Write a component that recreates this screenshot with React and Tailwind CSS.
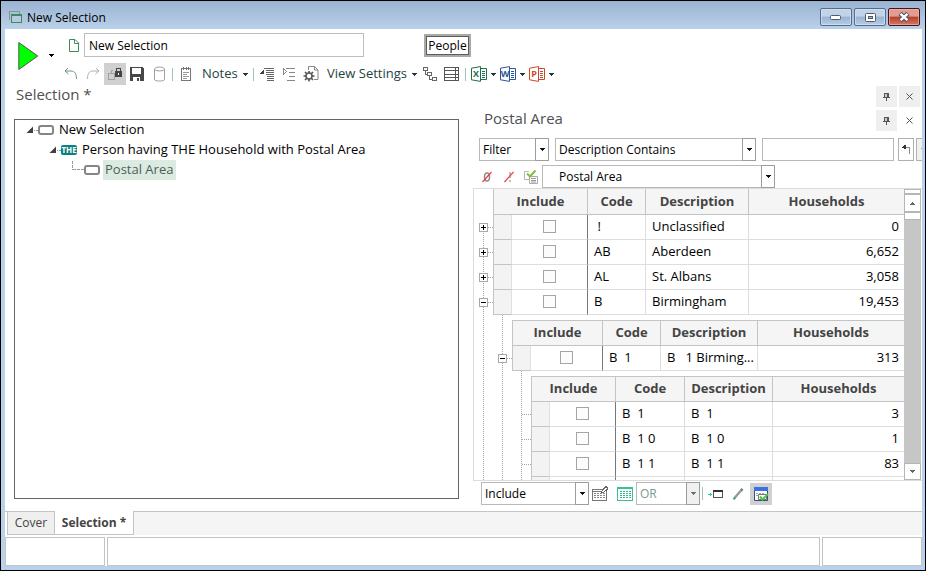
import clsx from "clsx";

const Caret = ({ className = "fill-[#1d3b33]" }) => (
  <svg width="5" height="3" viewBox="0 0 5 3" className={className} shapeRendering="crispEdges">
    <path d="M0 0h5v1H4v1H3v1H2V2H1V1H0z" />
  </svg>
);

const Separator = () => <span className="mx-0.5 h-[13px] w-px shrink-0 bg-[#9fc4b0]" />;

const IconButton = ({ label, active, children }) => (
  <button
    type="button"
    aria-label={label}
    className={clsx(
      "flex h-[22px] w-[22px] shrink-0 items-center justify-center",
      active && "bg-[#d0d0d0]"
    )}
  >
    {children}
  </button>
);

const Svg = ({ children, crisp = false }) => (
  <svg
    width="16"
    height="16"
    viewBox="0 0 16 16"
    fill="none"
    shapeRendering={crisp ? "crispEdges" : "auto"}
  >
    {children}
  </svg>
);

const Combo = ({
  label,
  value,
  className,
  selectClassName = "pl-[3px] text-black",
  disabled,
}) => (
  <div className={clsx("relative h-[23px] shrink-0", className)}>
    <select
      aria-label={label}
      disabled={disabled}
      className={clsx(
        "block h-full w-full appearance-none border border-[#b9b9b9] bg-white pr-4 text-[12px] leading-5",
        selectClassName
      )}
    >
      <option>{value}</option>
    </select>
    <span
      className={clsx(
        "pointer-events-none absolute inset-y-0 right-0 flex w-[14px] items-center justify-center border border-[#9d9d9d]",
        disabled ? "bg-[#f0f0f0]" : "bg-white"
      )}
    >
      <Caret className={disabled ? "fill-[#6f6f6f]" : "fill-[#111111]"} />
    </span>
  </div>
);

const OfficeIcon = ({ letter, color }) => (
  <svg width="16" height="16" viewBox="0 0 16 16" fill="none">
    <path d="M9 2.5h6.5v11H9" fill="#fff" stroke={color} />
    <path d="M11 5.5h3M11 7.5h3M11 9.5h3M11 11.5h3" stroke={color} />
    <path d="M.5 2.2 9.5.6v14.8L.5 13.8z" fill="#fff" stroke={color} />
    <text x="5" y="11" fontSize="9" fontWeight="700" textAnchor="middle" fill={color}>
      {letter}
    </text>
  </svg>
);

const PanelButtons = ({ lightClose }) => (
  <div className="flex gap-0.5 pr-0.5">
    <button
      type="button"
      aria-label="Pin"
      className="flex h-[21px] w-[21px] items-center justify-center bg-[#efefef]"
    >
      <svg width="7" height="8" viewBox="0 0 7 8" shapeRendering="crispEdges">
        <path d="M1 0h5v4h1v1H4v3H3V5H0V4h1z" fill="#555" />
        <path d="M2 1h2v3H2z" fill="#ccc" />
      </svg>
    </button>
    <button
      type="button"
      aria-label="Close"
      className={clsx(
        "flex h-[21px] w-[21px] items-center justify-center",
        !lightClose && "bg-[#efefef]"
      )}
    >
      <svg width="7" height="7" viewBox="0 0 7 7">
        <path d="M.5.5l6 6M6.5.5l-6 6" stroke="#555" />
      </svg>
    </button>
  </div>
);

const TitleBar = () => (
  <header className="flex h-7 shrink-0 items-center bg-linear-to-b from-[#9ab3d1] to-[#b9d1ea] pt-1 pr-[5px] pl-2">
    <svg width="13" height="12" viewBox="0 0 13 12" fill="none" shapeRendering="crispEdges">
      <path d="M.5 8.5v-8h10v2" stroke="#8b9296" />
      <path d="M2.5 3.5h10v8h-10z" fill="#b4cbe0" stroke="#3e8a5c" />
      <path d="M2 4.500h11" stroke="#3e8a5c" />
    </svg>
    <h1 className="ml-[5px] flex-1 pt-0.5 text-[12px] leading-5 text-black">New Selection</h1>
    <div className="flex gap-0.5">
      <button
        type="button"
        aria-label="Minimize"
        className="flex h-[18px] w-8 items-center justify-center rounded-[2px] border border-[#586c88] bg-linear-to-b from-[#c0d3e8] from-45% via-[#98b3d2] via-50% to-[#b5cde8] inset-ring inset-ring-[#d6e4f2]/70"
      >
        <svg width="12" height="5" viewBox="0 0 12 5">
          <rect x=".5" y=".5" width="10" height="4" rx="1" fill="#fff" stroke="#535b69" />
        </svg>
      </button>
      <button
        type="button"
        aria-label="Maximize"
        className="flex h-[18px] w-8 items-center justify-center rounded-[2px] border border-[#586c88] bg-linear-to-b from-[#c0d3e8] from-45% via-[#98b3d2] via-50% to-[#b5cde8] inset-ring inset-ring-[#d6e4f2]/70"
      >
        <svg width="11" height="9" viewBox="0 0 11 9">
          <rect x=".5" y=".5" width="10" height="8" rx="1" fill="#fff" stroke="#535b69" />
          <rect x="3.500" y="3.500" width="4" height="2" fill="#9db5d2" stroke="#535b69" />
        </svg>
      </button>
      <button
        type="button"
        aria-label="Close window"
        className="flex h-[18px] w-8 items-center justify-center rounded-[2px] border border-[#431422] bg-linear-to-b from-[#e39c90] from-45% via-[#b93c28] via-50% to-[#d27a66] inset-ring inset-ring-[#f0bdb2]/60"
      >
        <svg width="12" height="10" viewBox="0 0 12 10">
          <path d="M2 1.500l8 7M10 1.500l-8 7" stroke="#535666" strokeWidth="4.500" />
          <path d="M2.500 1.800l7 6.400M9.500 1.800l-7 6.400" stroke="#fff" strokeWidth="2.400" />
        </svg>
      </button>
    </div>
  </header>
);

const Toolbar = () => (
  <div className="flex h-[57px] shrink-0">
    <div className="flex w-[55px] shrink-0 items-center gap-2.5 pb-1 pl-[13px]">
      <button type="button" aria-label="Run">
        <svg width="21" height="30" viewBox="0 0 21 30">
          <path d="M.8 1.500v27L19.800 15z" fill="#00ff00" stroke="#4d5b4d" />
        </svg>
      </button>
      <button type="button" aria-label="Run options">
        <Caret className="fill-black" />
      </button>
    </div>
    <div className="flex flex-col gap-1.5 pt-1">
      <div className="flex h-6 items-center">
        <svg width="10" height="13" viewBox="0 0 10 13" fill="none" className="ml-[9px]">
          <path d="M.5.5h5.500l3.500 3.500v8.500h-9z" stroke="#3e8a5c" />
          <path d="M5.500.5v4h4" stroke="#3e8a5c" />
        </svg>
        <input
          type="text"
          aria-label="Selection name"
          defaultValue="New Selection"
          className="ml-[5px] h-6 w-[280px] border border-[#bdbdbd] px-1 text-[12px] text-black"
        />
        <button
          type="button"
          className="ml-[60px] h-[23px] w-[47px] border-2 border-[#a9a9a9] bg-white text-[12px] leading-[17px] text-black inset-ring inset-ring-[#5c5c5c]"
        >
          People
        </button>
      </div>
      <div className="flex h-[22px] items-center text-[13px] text-[#24443f]">
        <IconButton label="Undo">
          <Svg>
            <path d="M5 2 2 5l3.500 3M2.500 5H8c4 0 5.500 3 5.500 8" stroke="#6f9480" />
          </Svg>
        </IconButton>
        <IconButton label="Redo">
          <Svg>
            <path d="M11 2l3 3-3.500 3M13.500 5H8C4 5 2.500 8 2.500 13" stroke="#a9b2ae" />
          </Svg>
        </IconButton>
        <IconButton label="Lock" active>
          <Svg crisp>
            <path d="M1.500 7.500h6v6h-6zM5.500 4.500h-1v3M7.500 10.500h3v-2" stroke="#a2a2a2" />
            <path d="M8 5h7v6H8z" fill="#444" />
            <path d="M9.500 5V2.500h4V5" stroke="#444" />
            <path d="M11 7h1v2h-1z" fill="#fff" />
          </Svg>
        </IconButton>
        <IconButton label="Save">
          <Svg crisp>
            <path d="M1 1h12l2 2v12H1z" fill="#484848" />
            <path d="M3 2h9v6H3zM4 11h7v4H4z" fill="#fff" />
            <path d="M8 12h2v3H8z" fill="#484848" />
          </Svg>
        </IconButton>
        <IconButton label="Database">
          <Svg>
            <ellipse cx="8.500" cy="3" rx="5" ry="2" stroke="#a0a0a0" />
            <path d="M3.500 3v10.500c0 2 10 2 10 0V3" stroke="#a0a0a0" />
          </Svg>
        </IconButton>
        <Separator />
        <IconButton label="Note pad">
          <Svg crisp>
            <path d="M3.500 2.500h9v12h-9z" stroke="#777" />
            <path d="M5.500 1v3M8.500 1v3M10.500 1v3" stroke="#777" />
            <path d="M5 6.500h6M5 8.500h4M5 10.500h6M5 12.500h4" stroke="#999" />
          </Svg>
        </IconButton>
        <button type="button" className="flex w-[54px] items-center justify-between pr-[3px] pl-[5px]">
          Notes <Caret />
        </button>
        <Separator />
        <IconButton label="Outdent">
          <Svg crisp>
            <path d="M5 3v5H0z" fill="#444" />
            <path d="M5 2.500h10M7 4.500h8M7 6.500h8M7 8.500h8M8 10.500h7M8 12.500h7M8 14.500h7" stroke="#666" />
          </Svg>
        </IconButton>
        <IconButton label="Indent">
          <Svg crisp>
            <path d="M2.500 2.500l3 3-3 3z" stroke="#888" />
            <path d="M5 2.500h9M8 6.500h6M8 10.500h6M6 14.500h8" stroke="#888" />
          </Svg>
        </IconButton>
        <IconButton label="Document settings">
          <Svg>
            <path d="M5.500 4V.5h6l3.500 3.500v9.500h-4M11.500.5V4H15" stroke="#888" />
            <circle cx="6" cy="10" r="3" stroke="#555" strokeWidth="1.500" />
            <path
              d="M6 5v2M6 13v2.500M.5 10H3M9 10h2.500M2 6l1.500 1.500M8.500 12.500 10 14M10 6 8.500 7.500M3.500 12.500 2 14"
              stroke="#555"
              strokeWidth="1.600"
            />
          </Svg>
        </IconButton>
        <button type="button" className="flex w-[97px] items-center justify-between pr-0.5 pl-[5px]">
          View Settings <Caret />
        </button>
        <IconButton label="Tree view">
          <Svg crisp>
            <path
              d="M1.500 1.500h4v3h-4zM5.500 6.500h4v3h-4zM10.500 11.500h4v3h-4zM3.500 4v4h2M7.500 9v4h3"
              stroke="#666"
            />
          </Svg>
        </IconButton>
        <IconButton label="Table view">
          <Svg crisp>
            <path d="M.5 1.500h14v13H.5zM0 4.500h15M0 8.500h15M0 11.500h15M11.500 1v14" stroke="#555" />
          </Svg>
        </IconButton>
        <Separator />
        {[
          { letter: "X", color: "#1e7145", label: "Excel" },
          { letter: "W", color: "#2b579a", label: "Word" },
          { letter: "P", color: "#d04727", label: "PowerPoint" },
        ].map((app) => (
          <button
            key={app.letter}
            type="button"
            aria-label={`Export to ${app.label}`}
            className="flex w-[29px] items-center gap-1 pl-[3px]"
          >
            <OfficeIcon letter={app.letter} color={app.color} />
            <Caret />
          </button>
        ))}
      </div>
    </div>
  </div>
);

const TreeArrow = () => (
  <svg width="12" height="8" viewBox="0 0 12 8">
    <path d="M7 .5v6.500H.5z" fill="#404040" />
    <path d="M8 4.500h1M10 4.500h2" stroke="#999" />
  </svg>
);

const TreeShape = () => (
  <svg width="16" height="10" viewBox="0 0 16 10" fill="none">
    <rect x="1" y="1" width="14" height="8" rx="2" stroke="#858585" strokeWidth="2" />
  </svg>
);

const SelectionTree = () => (
  <ul className="flex-1 border border-[#646464] text-[13px] text-black">
    <li className="flex h-5 items-center pl-[11px]">
      <TreeArrow />
      <TreeShape />
      <span className="ml-[5px] pb-0.5 leading-[18px]">New Selection</span>
    </li>
    <li className="flex h-5 items-center pl-[34px]">
      <TreeArrow />
      <span className="flex h-[10px] w-4 items-center justify-center rounded-[2px] bg-[#0d8080] text-[8px] leading-none font-bold text-white">
        THE
      </span>
      <span className="ml-[5px] pb-0.5 leading-[18px]">
        Person having THE Household with Postal Area
      </span>
    </li>
    <li className="flex h-5 items-center pl-[57px]">
      <svg width="12" height="20" viewBox="0 0 12 20" fill="none" shapeRendering="crispEdges">
        <path d="M.5 1v9M1 9.500h11" stroke="#999" strokeDasharray="3 1" />
      </svg>
      <TreeShape />
      <span className="ml-[3px] bg-[#dcebe2] pr-[3px] pb-0.5 pl-0.5 leading-[18px] text-[#4c5f55]">
        Postal Area
      </span>
    </li>
  </ul>
);

const areas = [
  { code: " !", description: "Unclassified", households: "0", state: "closed" },
  { code: "AB", description: "Aberdeen", households: "6,652", state: "closed" },
  { code: "AL", description: "St. Albans", households: "3,058", state: "closed" },
  { code: "B", description: "Birmingham", households: "19,453", state: "open" },
];

const districts = [
  { code: "B  1", description: "B   1 Birming...", households: "313", state: "open" },
];

const sectors = [
  { code: "B  1", description: "B  1", households: "3" },
  { code: "B  1 0", description: "B  1 0", households: "1" },
  { code: "B  1 1", description: "B  1 1", households: "83" },
  { code: "", description: "", households: "" },
];

const Expander = ({ state, code }) => (
  <div className="relative flex h-[25px] items-center justify-center">
    <span className="absolute top-3 right-0 left-[10px] border-t border-dotted border-[#a5a5a5]" />
    {state && (
      <button
        type="button"
        aria-label={`${state === "open" ? "Collapse" : "Expand"} ${code}`}
        className="relative bg-white"
      >
        <svg width="9" height="9" viewBox="0 0 9 9" fill="none" shapeRendering="crispEdges">
          <path d="M.5.5h8v8h-8z" stroke="#a8a8a8" />
          <path d={state === "open" ? "M2 4.500h5" : "M2 4.500h5M4.500 2v5"} stroke="#000" />
        </svg>
      </button>
    )}
  </div>
);

// One level of the grid: expander gutter, the table itself and any nested level
const Band = ({ rows, columns, nested, children }) => (
  <div className={clsx("flex", nested && "flex-1")}>
    <div className={clsx("relative w-[19px] shrink-0", nested ? "pt-[31px]" : "pt-[26px]")}>
      <span
        className={clsx(
          "absolute bottom-0 left-[9px] border-l border-dotted border-[#a5a5a5]",
          nested ? "top-0" : "top-[38px]"
        )}
      />
      {rows.map((row) => (
        <Expander key={row.code} state={row.state} code={row.code} />
      ))}
    </div>
    <div className={clsx("flex min-w-0 flex-1 flex-col", nested && "pt-[5px]")}>
      <table className="w-full table-fixed border-separate border-spacing-0 border-l border-[#c4c4c4] text-[13px] leading-5">
        <colgroup>
          <col className="w-[18px]" />
          {columns.map((width) => (
            <col key={width} className={width} />
          ))}
          <col />
        </colgroup>
        <thead>
          <tr className="h-[26px] bg-[#f5f5f5] text-[#444444]">
            <th
              colSpan={2}
              className={clsx(
                "border-r border-b border-[#c4c4c4] px-0 pt-0 pb-0.5",
                nested && "border-t"
              )}
            >
              Include
            </th>
            {["Code", "Description", "Households"].map((title) => (
              <th
                key={title}
                className={clsx(
                  "border-b border-[#c4c4c4] px-0 pt-0 pb-0.5",
                  title !== "Households" && "border-r",
                  nested && "border-t"
                )}
              >
                {title}
              </th>
            ))}
          </tr>
        </thead>
        <tbody>
          {rows.map((row) => (
            <tr key={row.code} className="h-[25px] text-black">
              <td className="border-r border-b border-r-[#e0e0e0] border-b-[#c4c4c4] bg-[#f3f3f3] p-0" />
              <td className="border-r border-b border-r-[#777777] border-b-[#dedede] px-0 pt-0 pb-0.5">
                <input
                  type="checkbox"
                  aria-label={`Include ${row.code}`}
                  className="mx-auto block h-[13px] w-[13px] appearance-none border border-[#a5a5a5] bg-[#fcfcfc]"
                />
              </td>
              <td className="border-r border-b border-[#dedede] pt-0 pr-0 pb-0.5 pl-[6px] whitespace-pre">
                {row.code}
              </td>
              <td className="border-r border-b border-[#dedede] pt-0 pr-0 pb-0.5 pl-[6px] whitespace-pre">
                {row.description}
              </td>
              <td className="border-b border-[#dedede] pt-0 pr-[5px] pb-0.5 text-right">
                {row.households}
              </td>
            </tr>
          ))}
        </tbody>
      </table>
      {children}
    </div>
  </div>
);

const ScrollBar = () => (
  <div className="flex w-[17px] shrink-0 flex-col bg-[#c6c6c6]">
    <span className="h-[5px] border border-[#b5b5b5] bg-white" />
    <button
      type="button"
      aria-label="Scroll up"
      className="flex h-[18px] items-center justify-center border border-[#b5b5b5] bg-white"
    >
      <svg width="5" height="3" viewBox="0 0 5 3" shapeRendering="crispEdges">
        <path d="M2 0h1v1h1v1h1v1H0V2h1V1h1z" fill="#666" />
      </svg>
    </button>
    <span className="h-2 border border-[#b5b5b5] bg-white" />
    <span className="flex-1" />
    <button
      type="button"
      aria-label="Scroll down"
      className="flex h-[17px] items-center justify-center border border-[#b5b5b5] bg-white"
    >
      <Caret className="fill-[#666666]" />
    </button>
  </div>
);

const PostalGrid = () => (
  <div className="flex min-h-0 flex-1 border border-r-0 border-[#dcdcdc]">
    <div className="flex min-w-0 flex-1 flex-col overflow-hidden">
      <Band rows={areas} columns={["w-[76px]", "w-[58px]", "w-[103px]"]}>
        <Band rows={districts} columns={["w-[72px]", "w-[58px]", "w-[97px]"]} nested>
          <Band rows={sectors} columns={["w-[66px]", "w-[69px]", "w-[88px]"]} nested />
        </Band>
      </Band>
    </div>
    <ScrollBar />
    <span className="w-px" />
  </div>
);

const PostalPanel = () => (
  <section className="flex w-[449px] shrink-0 flex-col pt-[3px]">
    <div className="flex h-[21px] items-center justify-between pl-[11px]">
      <h2 className="pb-1 text-[15px] leading-[17px] text-[#505050]">Postal Area</h2>
      <PanelButtons lightClose />
    </div>
    <div className="mt-[7px] flex overflow-hidden pl-1.5">
      <Combo label="Mode" value="Filter" className="w-[70px]" />
      <Combo label="Filter type" value="Description Contains" className="ml-1.5 w-[201px]" />
      <input
        type="text"
        aria-label="Filter text"
        className="ml-1.5 h-[23px] w-[132px] shrink-0 border border-[#b9b9b9] px-1 text-[12px]"
      />
      <button
        type="button"
        aria-label="Apply filter"
        className="ml-1 flex h-[23px] w-4 shrink-0 items-center justify-center border border-[#b0b0b0] bg-white"
      >
        <svg width="9" height="9" viewBox="0 0 9 9" fill="none" shapeRendering="crispEdges">
          <path d="M0 2h1V1h1V0h2v4H2V3H1V3H0z" fill="#333" />
          <path d="M4 2.500h3.500V9" stroke="#888" />
        </svg>
      </button>
      <button
        type="button"
        aria-label="Next filter"
        className="ml-0.5 flex h-[23px] w-4 shrink-0 items-center border border-[#b0b0b0] bg-[#f0f0f0] pl-1"
      >
        <Caret className="fill-[#999999]" />
      </button>
    </div>
    <div className="mt-1 flex items-center pl-[3px]">
      <IconButton label="Exclude zero counts">
        <Svg>
          <ellipse cx="8" cy="8" rx="2.500" ry="4" stroke="#8c8c8c" strokeWidth="1.500" />
          <path d="M3.500 13 12.500 3" stroke="#ee3d44" strokeWidth="1.200" />
        </Svg>
      </IconButton>
      <IconButton label="Exclude unclassified">
        <Svg>
          <path d="M9 3v6M9 11v2" stroke="#c0c0c0" strokeWidth="2" />
          <path d="M3.500 13 12.500 3" stroke="#ee3d44" strokeWidth="1.200" />
        </Svg>
      </IconButton>
      <IconButton label="Show selected">
        <Svg>
          <path d="M6 2.500H1.500v8H6" stroke="#b5b5b5" />
          <path d="M6.500 7.500h8v7h-8z" fill="#fff" stroke="#aaa" />
          <path d="M8 9.500h5M8 11.500h5M8 13h5" stroke="#999" />
          <path d="M4 4.500 7 7.500l5.500-6" stroke="#83bf3f" strokeWidth="2" />
        </Svg>
      </IconButton>
      <Combo
        label="Variable"
        value="Postal Area"
        className="w-[233px]"
        selectClassName="pl-4 text-black"
      />
    </div>
    <PostalGrid />
    <div className="mt-px mb-1.5 flex h-[23px] items-center pl-2">
      <Combo label="Include mode" value="Include" className="w-[108px]" />
      <IconButton label="Edit table">
        <Svg crisp>
          <path d="M.5 3.500h14v11H.5zM0 5.500h9" stroke="#777" />
          <path d="M2 7.500h11M2 9.500h11M2 11.500h11" stroke="#888" strokeDasharray="2 1" />
          <path d="M9 6 14 .5l2 2L11 7z" fill="#fff" stroke="#666" />
        </Svg>
      </IconButton>
      <span className="w-[3px]" />
      <IconButton label="Table">
        <Svg crisp>
          <path d="M.5 1.500h15v13H.5zM0 2.500h16" stroke="#35c295" />
          <path d="M3 5.500h11M3 7.500h11M3 9.500h11M3 11.500h11" stroke="#35b58c" strokeDasharray="2 1" />
        </Svg>
      </IconButton>
      <Combo
        label="Operator"
        value="OR"
        className="w-16"
        selectClassName="pl-[3px] text-[#7d9a8c]"
        disabled
      />
      <Separator />
      <IconButton label="Send to window">
        <Svg crisp>
          <path d="M0 8.500h4M2.500 7v3" stroke="#35c295" />
          <path d="M5.500 4.500h9v7h-9z" fill="#fff" stroke="#555" />
          <path d="M5 4h10v2H5z" fill="#333" />
        </Svg>
      </IconButton>
      <IconButton label="Edit">
        <Svg>
          <path d="M4.500 12 11 4.500" stroke="#999" strokeWidth="2.500" />
          <path d="M11 4.500 12.500 3" stroke="#4c8a68" strokeWidth="2.500" />
          <path d="M3.500 13.300 5 11.500" stroke="#35a580" strokeWidth="2" />
        </Svg>
      </IconButton>
      <span className="w-px" />
      <IconButton label="Auto apply" active>
        <Svg>
          <path d="M1 1h14v13H1z" fill="#fdfdfd" />
          <path d="M1 1h14v4H1z" fill="#3c6fe0" />
          <path d="M1.500 5v9.500h13V5" stroke="#33517f" />
          <path d="M3 7.500h9M3 9.500h2" stroke="#9aa7bb" strokeDasharray="2 1" />
          <path d="M5.500 8.500h8v5h-8z" stroke="#777" />
          <path d="M7 10.500l2.500 3L15 8" stroke="#53c746" strokeWidth="2" />
        </Svg>
      </IconButton>
    </div>
  </section>
);

const App = () => (
  <div className="flex h-screen flex-col overflow-hidden border border-black bg-[#b9d1ea] font-['Open_Sans',sans-serif]">
    <TitleBar />
    <main className="mx-1 mr-[3px] mb-1 flex min-h-0 flex-1 flex-col bg-white">
      <Toolbar />
      <div className="flex h-[21px] shrink-0 items-center justify-between pl-[11px]">
        <h2 className="pb-1 text-[15px] leading-[17px] text-[#505050]">Selection *</h2>
        <PanelButtons />
      </div>
      <div className="flex min-h-0 flex-1">
        <section className="flex min-w-0 flex-1 flex-col pt-3 pr-[14px] pb-3 pl-[9px]">
          <SelectionTree />
        </section>
        <PostalPanel />
      </div>
      <nav className="flex h-6 shrink-0 text-[12px] leading-5 text-[#444444]">
        <span className="w-0.5 border-t border-[#c4c4c4]" />
        <button type="button" className="w-12 border border-[#c4c4c4] bg-[#efefef]">
          Cover
        </button>
        <button type="button" className="w-[79px] border-r border-b border-[#c4c4c4] font-bold">
          Selection *
        </button>
        <span className="flex-1 border-t border-[#c4c4c4] bg-[#f5f5f5]" />
      </nav>
      <footer className="mt-0.5 flex h-[29px] shrink-0 gap-0.5">
        <div className="w-[100px] border border-[#c4c4c4]" />
        <div className="flex-1 border border-[#c4c4c4]" />
        <div className="w-[100px] border border-[#c4c4c4]" />
      </footer>
    </main>
  </div>
);

export default App;
